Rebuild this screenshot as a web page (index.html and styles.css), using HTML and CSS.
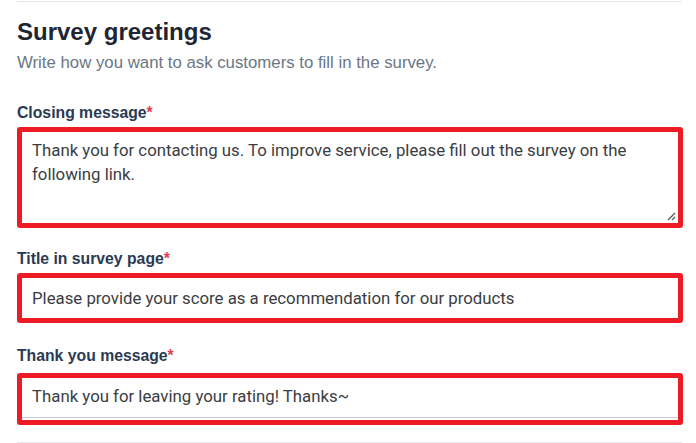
FILE: index.html
```html
<!DOCTYPE html>
<html>
<head>
<meta charset="utf-8">
<link rel="stylesheet" href="styles.css">
</head>
<body>
<div class="page">
  <section class="section">
    <h2 class="title">Survey greetings</h2>
    <p class="desc">Write how you want to ask customers to fill in the survey.</p>

    <div class="field field-first">
      <label class="label">Closing message<span class="req">*</span></label>
      <div class="hl hl-area">
        <div class="area">Thank you for contacting us. To improve service, please fill out the survey on the following link.</div>
        <svg class="grip" width="10" height="10" viewBox="0 0 10 10"><path d="M9 2 L2 9 M9 6 L6 9" stroke="#555" stroke-width="1.2" fill="none"/></svg>
      </div>
    </div>

    <div class="field">
      <label class="label">Title in survey page<span class="req">*</span></label>
      <div class="hl hl-title">
        <div class="input">Please provide your score as a recommendation for our products</div>
      </div>
    </div>

    <div class="field">
      <label class="label label-last">Thank you message<span class="req">*</span></label>
      <div class="hl hl-last">
        <div class="input input-line">Thank you for leaving your rating! Thanks~</div>
      </div>
    </div>
  </section>
</div>
</body>
</html>
```
FILE: styles.css
```css
html, body {
  margin: 0;
  padding: 0;
  background: #ffffff;
}
.page {
  width: 696px;
  height: 443px;
  overflow: hidden;
}
.section {
  margin: 1px 14px 0 17px;
  border-top: 1px solid #e5e7eb;
  border-bottom: 1px solid #e5e7eb;
  padding-top: 15px;
  padding-bottom: 17px;
}
.title {
  margin: 0;
  font-family: "Liberation Sans", Arial, sans-serif;
  font-weight: 700;
  font-size: 24px;
  line-height: 30px;
  color: #1f2633;
}
.desc {
  margin: 5px 0 0 0;
  font-family: "Liberation Sans", Arial, sans-serif;
  font-size: 16.8px;
  line-height: 22px;
  color: #6b7685;
}
.field {
  display: flex;
  flex-direction: column;
}
.field-first { margin-top: 29px; }
.label {
  font-family: "Liberation Sans", Arial, sans-serif;
  font-weight: 700;
  font-size: 15.75px;
  line-height: 20px;
  color: #2b3a52;
  margin-bottom: 4px;
}
.label-last { margin-bottom: 7px; margin-top: 1px; }
.req { color: #e8384f; }
.hl {
  position: relative;
  margin-right: -1px;
  border: 5px solid #ed1c24;
  border-radius: 3px;
  box-sizing: border-box;
}
.hl-area { height: 101px; margin-bottom: 21px; }
.hl-title { height: 50px; margin-bottom: 22px; }
.hl-last { height: 52px; }
.area, .input {
  font-family: Roboto, "Liberation Sans", sans-serif;
  font-size: 16.8px;
  color: #3a3d42;
  padding: 0 10px;
}
.area {
  line-height: 24px;
  padding-top: 6px;
}
.input {
  line-height: 22px;
  padding-top: 9px;
  padding-bottom: 9px;
}
.input-line {
  border-bottom: 1px solid #c9ced8;
  padding-top: 7px;
  padding-bottom: 10px;
}
.grip {
  position: absolute;
  right: 2px;
  bottom: 2px;
}
```
